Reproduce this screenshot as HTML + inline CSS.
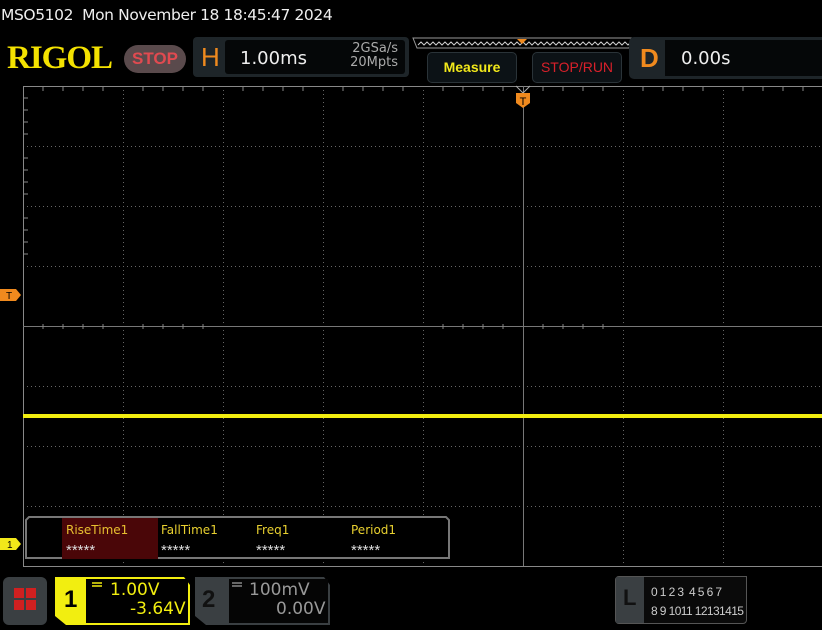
<!DOCTYPE html><html><head><style>
body{margin:0;width:822px;height:630px;background:#000;overflow:hidden;position:relative;font-family:"Liberation Sans","DejaVu Sans",sans-serif;color:#fff}
.a{position:absolute}
</style></head><body>
<div class="a" style="left:1px;top:6px;font-size:15.5px;color:#eee;font-family:'DejaVu Sans',sans-serif;letter-spacing:-0.4px">MSO5102&nbsp; Mon November 18 18:45:47 2024</div>
<div class="a" style="left:7px;top:40px;font-size:33px;font-weight:bold;color:#f4e200;font-family:'Liberation Serif',serif;letter-spacing:-1px;line-height:36px">RIGOL</div>
<div class="a" style="left:124px;top:45px;width:62px;height:28px;border-radius:14px;background:#5a4a4c;color:#e04a50;font-size:17px;font-weight:bold;text-align:center;line-height:28px">STOP</div>
<div class="a" style="left:193px;top:37px;width:216px;height:40px;background:#1e2529;border-radius:4px"></div>
<div class="a" style="left:201px;top:42px;font-size:26px;color:#f08a1e">H</div>
<div class="a" style="left:225px;top:40px;width:180px;height:34px;background:#050708;border-radius:3px"></div>
<div class="a" style="left:240px;top:48px;font-size:18px;color:#eee;font-family:'DejaVu Sans',sans-serif">1.00ms</div>
<div class="a" style="left:343px;top:42px;font-size:13px;color:#aaa;line-height:14px;text-align:right;width:55px;font-family:'DejaVu Sans',sans-serif">2GSa/s<br>20Mpts</div>
<svg class="a" style="left:410px;top:36px" width="226" height="14"><path d="M3 2H223L219 12H7Z" fill="none" stroke="#999"/><path d="M8 9 l3 -3 l3 3 l3 -3 l3 3 l3 -3 l3 3 l3 -3 l3 3 l3 -3 l3 3 l3 -3 l3 3 l3 -3 l3 3 l3 -3 l3 3 l3 -3 l3 3 l3 -3 l3 3 l3 -3 l3 3 l3 -3 l3 3 l3 -3 l3 3 l3 -3 l3 3 l3 -3 l3 3 l3 -3 l3 3 l3 -3 l3 3 l3 -3 l3 3 l3 -3 l3 3 l3 -3 l3 3 l3 -3 l3 3 l3 -3 l3 3 l3 -3 l3 3 l3 -3 l3 3 l3 -3 l3 3 l3 -3 l3 3 l3 -3 l3 3 l3 -3 l3 3 l3 -3 l3 3 l3 -3 l3 3 l3 -3 l3 3 l3 -3 l3 3 l3 -3 l3 3 l3 -3 l3 3 l3 -3 l3 3 l3 -3 l3 3 l3 -3 l3 3 l3 -3 l3 3 l3 -3 l3 3 l3 -3 l3 3 l3 -3 l3 3" fill="none" stroke="#ccc"/><path d="M107 3h10l-5 5z" fill="#f08a1e"/></svg>
<div class="a" style="left:427px;top:52px;width:88px;height:29px;background:#0c1216;border:1px solid #2a3338;border-radius:5px;color:#f2e81a;font-weight:bold;font-size:14px;text-align:center;line-height:29px">Measure</div>
<div class="a" style="left:532px;top:52px;width:88px;height:29px;background:#0c1216;border:1px solid #2a3338;border-radius:5px;color:#d8202a;font-size:14px;text-align:center;line-height:29px">STOP/RUN</div>
<div class="a" style="left:629px;top:37px;width:193px;height:42px;background:#1e2529;border-radius:5px 0 0 5px"></div>
<div class="a" style="left:640px;top:43px;font-size:26px;color:#f08a1e;font-weight:bold">D</div>
<div class="a" style="left:665px;top:40px;width:157px;height:36px;background:#050708"></div>
<div class="a" style="left:681px;top:48px;font-size:18px;color:#eee;font-family:'DejaVu Sans',sans-serif">0.00s</div>
<svg class="a" style="left:0;top:0" width="822" height="630">
<g stroke="#666" stroke-width="1" stroke-dasharray="1 3" fill="none">
<path d="M123.5 86V566M223.5 86V566M323.5 86V566M423.5 86V566M623.5 86V566M723.5 86V566M823.5 86V566"/>
<path d="M23 146.5H822M23 206.5H822M23 266.5H822M23 386.5H822M23 446.5H822M23 506.5H822"/>
</g>
<g stroke="#888" fill="none">
<path d="M23.5 86V566M23 86.5H822M23 566.5H822"/>
<path d="M523.5 86V566M23 326.5H822" stroke="#777"/>
<path d="M43 86v5M63 86v5M83 86v5M103 86v5M143 86v5M163 86v5M183 86v5M203 86v5M243 86v5M263 86v5M283 86v5M303 86v5M343 86v5M363 86v5M383 86v5M403 86v5M443 86v5M463 86v5M483 86v5M503 86v5M543 86v5M563 86v5M583 86v5M603 86v5M643 86v5M663 86v5M683 86v5M703 86v5M743 86v5M763 86v5M783 86v5M803 86v5"/>
<path d="M23 98h5M23 110h5M23 122h5M23 134h5M23 158h5M23 170h5M23 182h5M23 194h5M23 218h5M23 230h5M23 242h5M23 254h5"/>
<path d="M43 324v5M63 324v5M83 324v5M103 324v5M143 324v5M163 324v5M183 324v5M203 324v5M443 324v5M463 324v5M483 324v5M503 324v5M543 324v5M563 324v5M583 324v5M603 324v5"/>
</g>
<path d="M516 86l7 7 7-7" stroke="#aaa" fill="none"/>
<path d="M516 93h14v10l-7 5-7-5z" fill="#f08a1e"/>
<text x="523" y="105" fill="#000" font-size="11" text-anchor="middle" font-family="Liberation Sans">T</text>
<path d="M0 289h16l5 6-5 6H0z" fill="#f08a1e"/>
<text x="6" y="299" fill="#000" font-size="10" font-family="Liberation Sans">T</text>
<path d="M0 538h16l5 6-5 6H0z" fill="#f2e81a"/>
<text x="7" y="548" fill="#000" font-size="10" font-family="Liberation Sans">1</text>
<rect x="23" y="414" width="799" height="4" fill="#f2ee10"/>
<path d="M29 517H446l3 3V558H26V520Z" fill="#000" stroke="#777" stroke-width="2"/>
<rect x="62" y="518" width="96" height="41" fill="#4a0608"/>
</svg>
<div class="a" style="left:66px;top:523px;font-size:12px;color:#e8c030;font-family:'DejaVu Sans',sans-serif">RiseTime1</div>
<div class="a" style="left:161px;top:523px;font-size:12px;color:#e8d030;font-family:'DejaVu Sans',sans-serif">FallTime1</div>
<div class="a" style="left:256px;top:523px;font-size:12px;color:#e8d030;font-family:'DejaVu Sans',sans-serif">Freq1</div>
<div class="a" style="left:351px;top:523px;font-size:12px;color:#e8d030;font-family:'DejaVu Sans',sans-serif">Period1</div>
<div class="a" style="left:66px;top:542px;font-size:15px;color:#ddd">*****</div>
<div class="a" style="left:161px;top:542px;font-size:15px;color:#ddd">*****</div>
<div class="a" style="left:256px;top:542px;font-size:15px;color:#ddd">*****</div>
<div class="a" style="left:351px;top:542px;font-size:15px;color:#ddd">*****</div>
<div class="a" style="left:3px;top:577px;width:44px;height:48px;background:#3a3f42;border-radius:6px"></div>
<div class="a" style="left:14px;top:588px;width:10px;height:10px;background:#d02020"></div>
<div class="a" style="left:26px;top:588px;width:10px;height:10px;background:#d02020"></div>
<div class="a" style="left:14px;top:600px;width:10px;height:10px;background:#d02020"></div>
<div class="a" style="left:26px;top:600px;width:10px;height:10px;background:#d02020"></div>
<svg class="a" style="left:54px;top:576px" width="280" height="50">
<path d="M1 1H130l6 8V49H12L1 40Z" fill="#f2ee10"/><rect x="32" y="3" width="102" height="44" fill="#000"/>
<path d="M141 1H270l6 8V49H152L141 40Z" fill="#3a3f42"/><rect x="175" y="3" width="99" height="44" fill="#050505"/>
<path d="M38 7h10M38 10h10" stroke="#f2ee10" stroke-width="1.5"/>
<path d="M178 7h10M178 10h10" stroke="#888" stroke-width="1.5"/>
</svg>
<div class="a" style="left:64px;top:586px;font-size:24px;color:#000;font-weight:bold">1</div>
<div class="a" style="left:110px;top:580px;font-size:17px;color:#f2ee10;font-family:'DejaVu Sans',sans-serif">1.00V</div>
<div class="a" style="left:130px;top:599px;font-size:17px;color:#f2ee10;font-family:'DejaVu Sans',sans-serif">-3.64V</div>
<div class="a" style="left:202px;top:586px;font-size:24px;color:#111;font-weight:bold">2</div>
<div class="a" style="left:249px;top:580px;font-size:17px;color:#999;font-family:'DejaVu Sans',sans-serif">100mV</div>
<div class="a" style="left:276px;top:599px;font-size:17px;color:#999;font-family:'DejaVu Sans',sans-serif">0.00V</div>
<div class="a" style="left:615px;top:576px;width:130px;height:46px;background:#0a0a0a;border:1px solid #555;border-radius:4px 0 4px 4px"></div>
<div class="a" style="left:616px;top:577px;width:28px;height:46px;background:#3a3f42"></div>
<div class="a" style="left:623px;top:585px;font-size:22px;color:#111;font-weight:bold">L</div>
<div class="a" style="left:651px;top:583px;font-size:12px;color:#ccc;line-height:19px;letter-spacing:-0.6px">0 1 2 3&nbsp; 4 5 6 7<br>8 9 1011 12131415</div>
</body></html>
